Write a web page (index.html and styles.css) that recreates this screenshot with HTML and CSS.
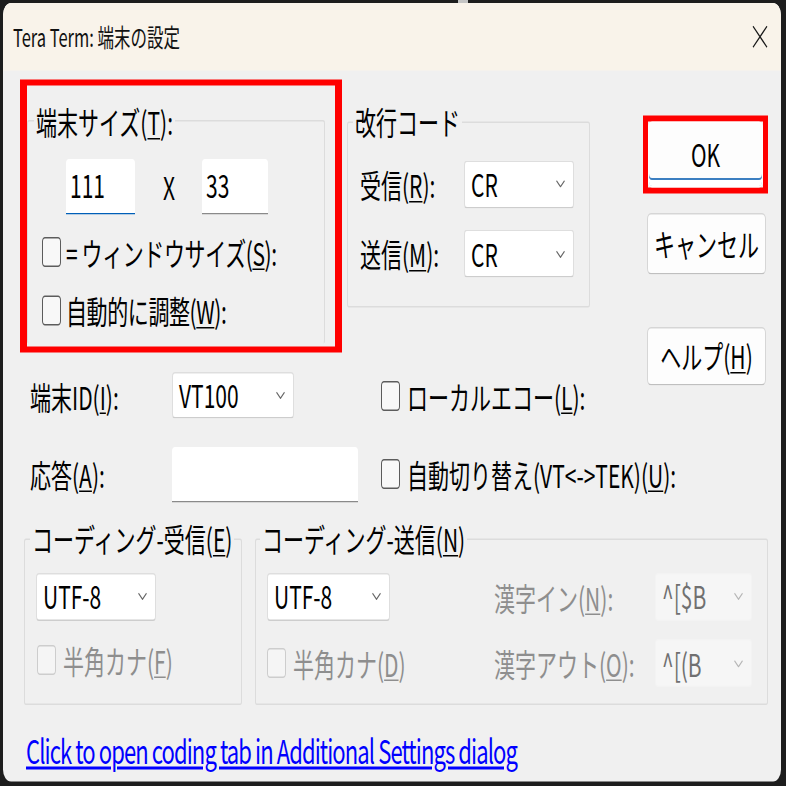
FILE: index.html
```html
<!DOCTYPE html>
<html lang="ja">
<head>
  <meta charset="UTF-8">
  <title>Tera Term: 端末の設定</title>
  <link rel="stylesheet" href="styles.css">
</head>
<body>
<div class="screen">
  <div class="window">
    <div class="titlebar">
      <span class="title">Tera Term: 端末の設定</span>
      <svg class="close" width="16" height="15" viewBox="0 0 16 15"><path d="M1 0.5L15 14.5M15 0.5L1 14.5" stroke="#1a1a1a" stroke-width="1.1" fill="none"/></svg>
    </div>

    <div class="content">
      <div class="top">
        <div class="left">
          <div class="groups">
            <div class="hl">
              <fieldset class="g-size">
                <legend>端末サイズ(<u>T</u>):</legend>
                <div class="size-row">
                  <div class="edit focus w-cols">111</div>
                  <span class="times">X</span>
                  <div class="edit w-rows">33</div>
                </div>
                <div class="check-row first"><span class="cb"></span><span>= ウィンドウサイズ(<u>S</u>):</span></div>
                <div class="check-row"><span class="cb"></span><span>自動的に調整(<u>W</u>):</span></div>
              </fieldset>
            </div>

            <fieldset class="g-newline">
              <legend>改行コード</legend>
              <div class="nl-row first">
                <label>受信(<u>R</u>):</label>
                <div class="select w-cr"><span>CR</span><svg class="chev" width="9" height="5" viewBox="0 0 9 5"><path d="M0.5 0.5l4 4 4-4" fill="none" stroke="#666" stroke-width="1"/></svg></div>
              </div>
              <div class="nl-row">
                <label>送信(<u>M</u>):</label>
                <div class="select w-cr"><span>CR</span><svg class="chev" width="9" height="5" viewBox="0 0 9 5"><path d="M0.5 0.5l4 4 4-4" fill="none" stroke="#666" stroke-width="1"/></svg></div>
              </div>
            </fieldset>
          </div>

          <div class="form-row id-row">
            <label>端末ID(<u>I</u>):</label>
            <div class="select w-id"><span>VT100</span><svg class="chev" width="9" height="5" viewBox="0 0 9 5"><path d="M0.5 0.5l4 4 4-4" fill="none" stroke="#666" stroke-width="1"/></svg></div>
            <div class="check-item echo"><span class="cb"></span><span>ローカルエコー(<u>L</u>):</span></div>
          </div>
        </div>

        <div class="buttons">
          <div class="ok-frame"><button class="btn ok">OK</button></div>
          <button class="btn cancel">キャンセル</button>
          <button class="btn help">ヘルプ(<u>H</u>)</button>
        </div>
      </div>

      <div class="form-row answer-row">
        <label>応答(<u>A</u>):</label>
        <div class="edit w-answer"></div>
        <div class="check-item autosw"><span class="cb"></span><span>自動切り替え(VT&lt;-&gt;TEK)(<u>U</u>):</span></div>
      </div>

      <div class="coding">
        <fieldset class="g-recv">
          <legend>コーディング-受信(<u>E</u>)</legend>
          <div class="fs-body">
            <div class="select w-utf"><span>UTF-8</span><svg class="chev" width="9" height="5" viewBox="0 0 9 5"><path d="M0.5 0.5l4 4 4-4" fill="none" stroke="#666" stroke-width="1"/></svg></div>
            <div class="check-item disabled kana"><span class="cb"></span><span>半角カナ(<u>F</u>)</span></div>
          </div>
        </fieldset>

        <fieldset class="g-send">
          <legend>コーディング-送信(<u>N</u>)</legend>
          <div class="send-grid">
            <div class="select w-utf2"><span>UTF-8</span><svg class="chev" width="9" height="5" viewBox="0 0 9 5"><path d="M0.5 0.5l4 4 4-4" fill="none" stroke="#666" stroke-width="1"/></svg></div>
            <label class="disabled">漢字イン(<u>N</u>):</label>
            <div class="select off"><span>^[$B</span><svg class="chev" width="9" height="5" viewBox="0 0 9 5"><path d="M0.5 0.5l4 4 4-4" fill="none" stroke="#b5b5b5" stroke-width="1"/></svg></div>
            <div class="check-item disabled"><span class="cb"></span><span>半角カナ(<u>D</u>)</span></div>
            <label class="disabled">漢字アウト(<u>O</u>):</label>
            <div class="select off"><span>^[(B</span><svg class="chev" width="9" height="5" viewBox="0 0 9 5"><path d="M0.5 0.5l4 4 4-4" fill="none" stroke="#b5b5b5" stroke-width="1"/></svg></div>
          </div>
        </fieldset>
      </div>

      <a class="link" href="#">Click to open coding tab in Additional Settings dialog</a>
    </div>
  </div>
</div>
</body>
</html>
```

FILE: styles.css
```css
* { box-sizing: border-box; }
html, body { margin: 0; padding: 0; }
body { width: 786px; height: 786px; overflow: hidden; background: #1d1d1d; font-family: "Noto Sans CJK JP", "Noto Sans", sans-serif; font-size: 21px; color: #000; }

/* the capture is stretched vertically, so the dialog is laid out flat and scaled */
.screen {
  width: 786px;
  height: 524px;
  padding: 2px 5px 0 3px;
  transform: scaleY(1.5);
  transform-origin: 0 0;
  background: linear-gradient(to right, transparent 458px, #c4c4c4 458px, #c4c4c4 468px, transparent 468px) no-repeat 0 0 / 100% 2px, #1d1d1d;
}
.window { height: 519.3px; background: #f0f0f0; border-radius: 8px; overflow: hidden; }

.titlebar { height: 44.7px; background: #f9f3ea; display: flex; align-items: center; justify-content: space-between; padding: 0 13px 0 10px; }
.title { font-size: 16.5px; line-height: 20px; color: #111; }
.close { display: block; }

.content { padding: 6.6px 0 0 17px; }
.top { display: flex; }
.left { width: 623px; }
.groups { display: flex; align-items: flex-start; }

fieldset { margin: 0; padding: 0; min-width: 0; border: 1px solid #dcdcdc; border-radius: 2px; }
legend { padding: 0 2px; line-height: 28px; white-space: nowrap; }
label { white-space: nowrap; }
u { text-underline-offset: 2px; text-decoration-thickness: 1px; }

/* highlighted size group */
.hl { width: 322px; height: 181.3px; border: solid #f00; border-width: 4.7px 7px; padding-top: 9.3px; }
.g-size { width: 298px; height: 162.7px; border-bottom: 0; }
.g-size legend { margin-left: 6px; }
.size-row { display: flex; align-items: center; margin: 11.4px 0 0 38px; }
.times { margin: 0 27px 0 28px; }
.check-row { display: flex; align-items: center; gap: 5px; height: 28px; margin: 11.3px 0 0 14px; white-space: nowrap; letter-spacing: -0.4px; }
.check-row.first { margin-top: 11.4px; }

.edit { height: 36.7px; background: #fff; border-bottom: 1px solid #8a8a8a; border-radius: 3px 3px 0 0; padding-left: 4px; display: flex; align-items: center; line-height: 1; }
.edit.focus { border-bottom: 1.4px solid #005fb8; }
.w-cols { width: 69px; }
.w-rows { width: 66px; }
.w-answer { width: 186px; }

.cb { width: 19px; height: 20px; border: 1px solid #5c5c5c; border-radius: 3px; background: #f8f8f8; flex: none; }

.g-newline { width: 243px; height: 137.7px; margin: 14px 0 0 5px; }
.g-newline legend { margin-left: 5px; }
.nl-row { display: flex; align-items: center; padding-left: 12px; margin-top: 14.6px; }
.nl-row.first { margin-top: 11.4px; }
.nl-row label { width: 104px; }

.select { height: 32px; background: #fff; border: 1px solid #dedede; border-bottom-color: #cdcdcd; border-radius: 3px; display: flex; align-items: center; justify-content: space-between; padding: 0 8px 0 6px; line-height: 1; }
.chev { display: block; flex: none; }
.w-cr { width: 110px; }
.w-id { width: 122px; height: 31.3px; }
.w-utf { width: 120px; }
.w-utf2 { width: 123px; }
.select.off { width: 97px; background: #f6f6f6; border-color: #f3f3f3; color: #707070; }

/* buttons */
.buttons { width: 125px; margin-top: 24px; display: flex; flex-direction: column; }
.btn { font: inherit; color: #000; background: #fdfdfd; border: 1px solid #d6d6d6; border-bottom-color: #bfbfbf; border-radius: 4px; padding: 0; margin: 0 0 0 4px; width: 119px; line-height: 1; }
.ok-frame { border: solid #f00; border-width: 4px 5px; }
.btn.ok { width: 115px; height: 43.3px; margin: 0; border-color: #fff; box-shadow: inset 0 -4px 0 #fff, inset 0 -5.3px 0 #3c7fc1; }
.btn.cancel { height: 40.7px; margin-top: 13.3px; }
.btn.help { height: 39.3px; margin-top: 35.3px; }

/* rows below */
.form-row { display: flex; align-items: center; padding-left: 10px; }
.form-row label { width: 142px; }
.id-row { margin-top: 13.3px; }
.answer-row { margin-top: 18.7px; }
.check-item { display: flex; align-items: center; gap: 7px; white-space: nowrap; }
.echo { margin-left: 87px; }
.autosw { margin-left: 23px; }

.coding { display: flex; margin-top: 10.6px; }
.g-recv { width: 218px; height: 124.7px; margin-left: 4px; }
.g-recv legend { margin-left: 5px; }
.fs-body { padding-left: 11px; margin-top: 8.7px; }
.kana { margin-top: 12px; height: 28px; margin-left: 1px; }
.g-send { width: 513px; height: 124.7px; margin-left: 13px; }
.g-send legend { margin-left: 4px; }
.send-grid { display: grid; grid-template-columns: 227px 161px 97px; grid-template-rows: 32px 31.3px; row-gap: 12.7px; align-items: center; padding-left: 11px; margin-top: 8.7px; }

.disabled { color: #8e8e8e; }
.disabled .cb { border-color: #cdcdcd; background: #f5f5f5; }

.link { display: inline-block; margin: 14.7px 0 0 6px; line-height: 28px; font-size: 22px; letter-spacing: -0.9px; color: #0000ff; text-decoration: underline; white-space: nowrap; }
```
